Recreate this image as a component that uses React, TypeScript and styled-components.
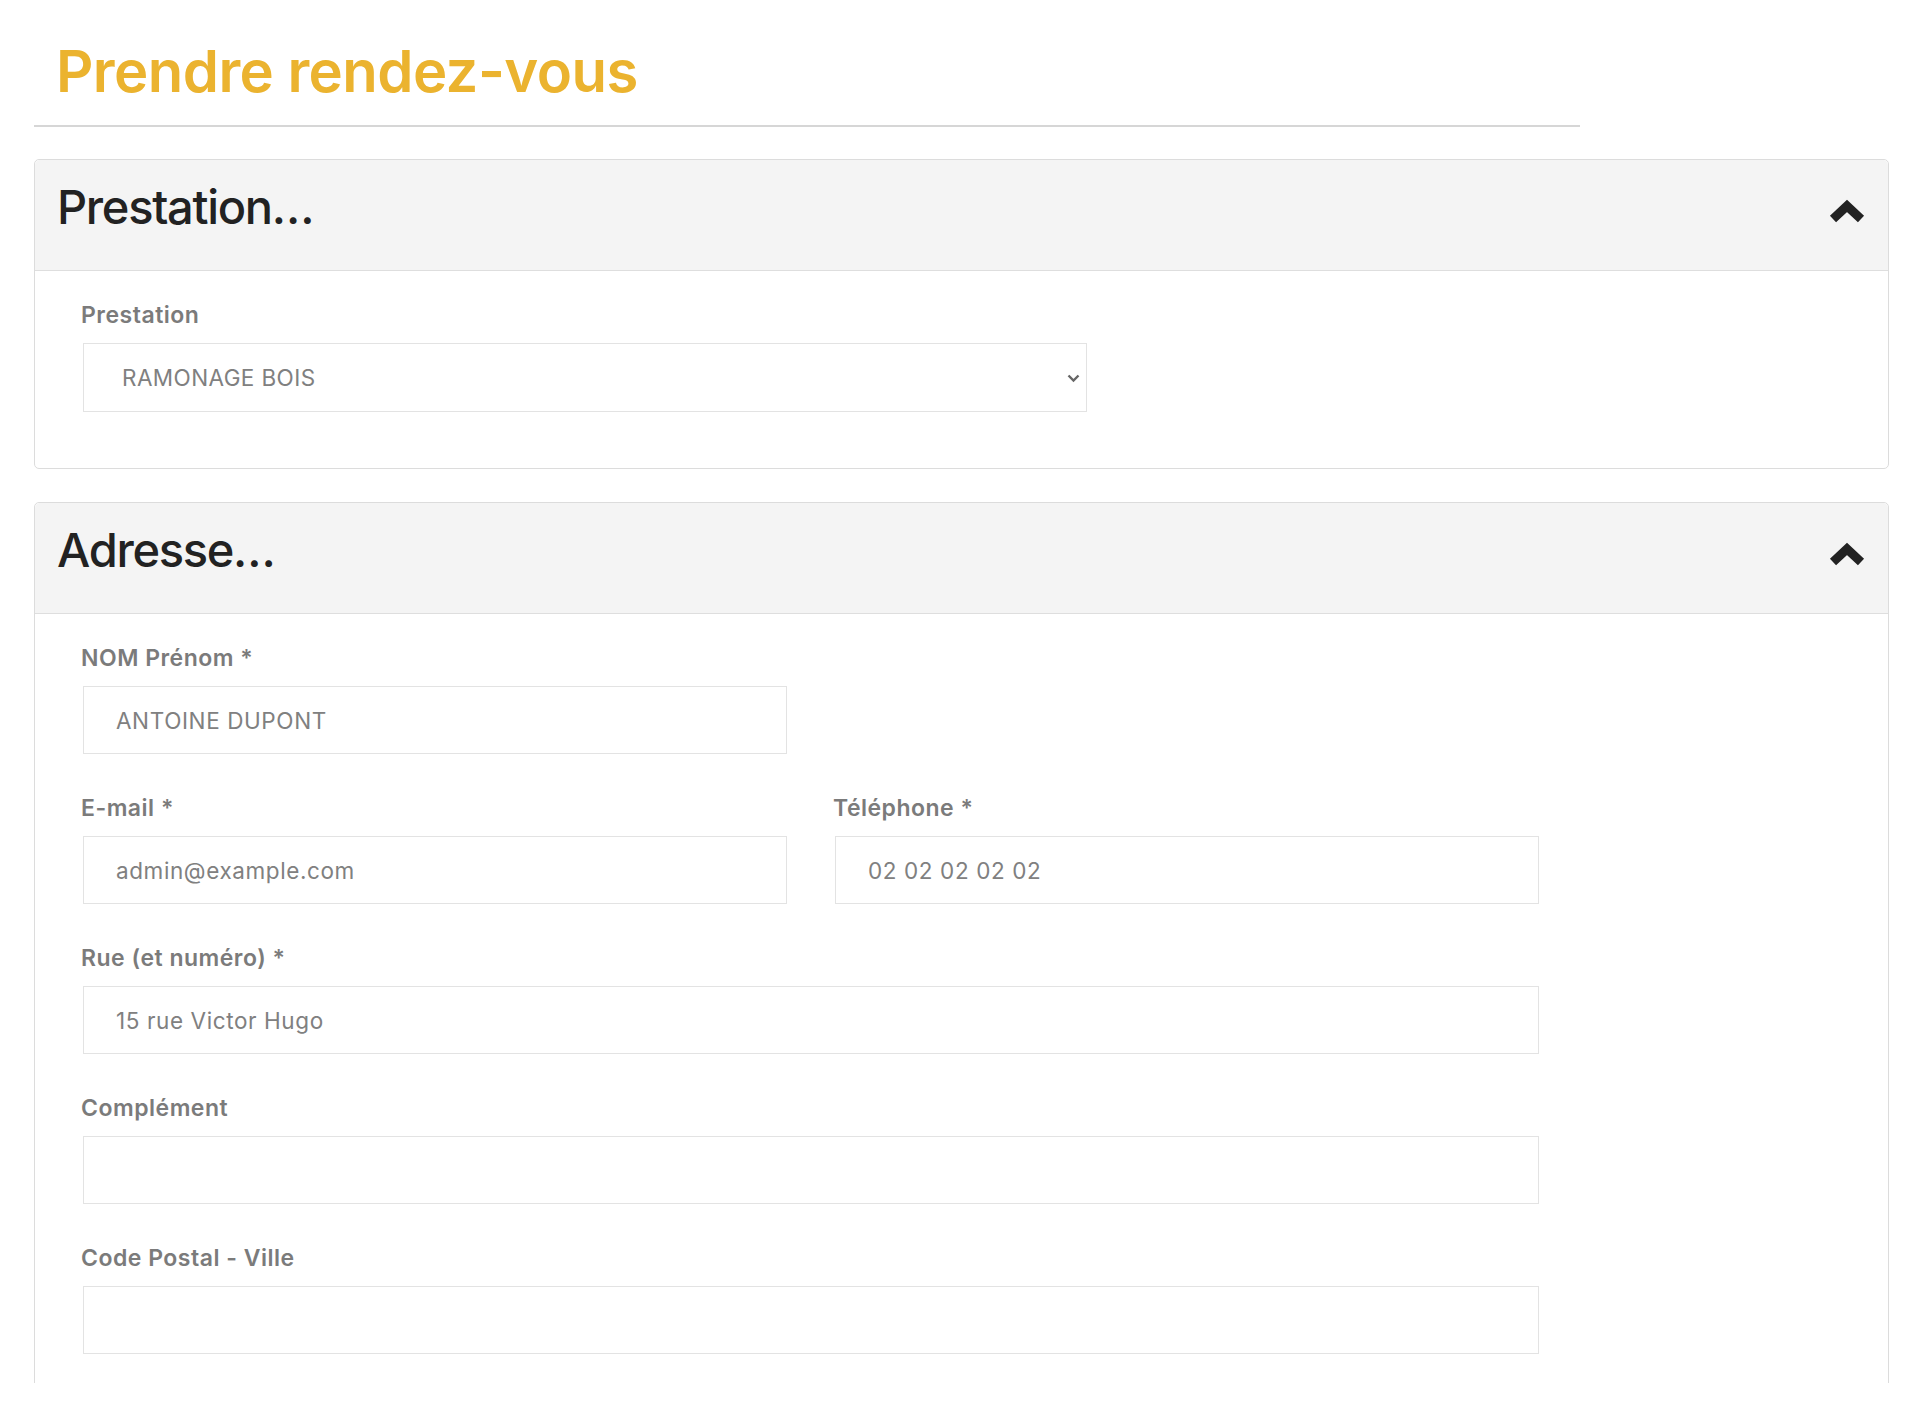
import styled, { createGlobalStyle } from "styled-components";

const GlobalStyle = createGlobalStyle`
    html, body {
        margin: 0;
        padding: 0;
        background: #ffffff;
    }
    body {
        font-family: Inter, "Noto Sans", "Liberation Sans", sans-serif;
        -webkit-font-smoothing: antialiased;
    }
    * {
        box-sizing: border-box;
    }
`;

const Page = styled.main`
    height: 1383px;
    overflow: hidden;
    padding: 0 31px 0 34px;
`;

const TitleBlock = styled.div`
    width: 1546px;
    padding: 36px 0 18px 22px;
    border-bottom: 2px solid #d6d6d6;
    margin-bottom: 32px;
`;

const PageTitle = styled.h1`
    margin: 0;
    font-size: 58px;
    line-height: 71px;
    font-weight: 600;
    letter-spacing: -0.55px;
    color: #ebb32f;
`;

const Card = styled.section`
    border: 1px solid #dcdcdc;
    border-radius: 5px;
    background: #fff;
    margin-bottom: 33px;
`;

const CardHeader = styled.header`
    height: 111px;
    display: flex;
    align-items: center;
    justify-content: space-between;
    padding: 0 23px 0 22px;
    background: #f4f4f4;
    border-bottom: 1px solid #dedede;
    border-radius: 5px 5px 0 0;
`;

const CardTitle = styled.h2`
    margin: 0 0 16px 0;
    font-size: 47px;
    line-height: 58px;
    font-weight: 500;
    letter-spacing: -1.3px;
    color: #222;
`;

const Toggle = styled.button`
    border: 0;
    background: transparent;
    padding: 0;
    margin: 0 0 8px 0;
    display: flex;
    cursor: pointer;
`;

const CardBody = styled.div<{ $bottom: number }>`
    padding: 28px 48px ${(p) => p.$bottom}px 48px;
`;

const FieldGrid = styled.div`
    display: grid;
    grid-template-columns: 704px 704px;
    column-gap: 48px;
    width: 1456px;
`;

const Field = styled.div<{ $span?: boolean; $width?: number }>`
    grid-column: ${(p) => (p.$span ? "1 / -1" : "auto")};
    width: ${(p) => (p.$width ? `${p.$width}px` : "auto")};
    margin-bottom: 38px;
    &:last-child {
        margin-bottom: 0;
    }
`;

const Label = styled.label`
    display: block;
    margin: 0 0 11px -2px;
    font-size: 23px;
    line-height: 33px;
    font-weight: 600;
    letter-spacing: 0.5px;
    color: #7b7b7b;
`;

const Input = styled.input`
    display: block;
    width: 100%;
    height: 68px;
    border: 1px solid #e3e3e3;
    border-radius: 0;
    padding: 0 20px 0 32px;
    font-family: inherit;
    font-size: 22.5px;
    letter-spacing: 0.6px;
    color: #808080;
    background: #fff;
    outline: none;
`;

const SelectWrap = styled.div`
    position: relative;
`;

const Select = styled.select`
    display: block;
    width: 100%;
    height: 69px;
    border: 1px solid #e3e3e3;
    border-radius: 0;
    padding: 0 40px 0 38px;
    font-family: inherit;
    font-size: 22.5px;
    letter-spacing: 0.4px;
    color: #808080;
    background: #fff;
    appearance: none;
    outline: none;
`;

const SelectArrow = styled.svg`
    position: absolute;
    right: 7px;
    top: 50%;
    margin-top: -4px;
    pointer-events: none;
`;

function ChevronUp() {
    return (
        <svg width="36" height="24" viewBox="0 0 36 24">
            <polyline
                points="4,20 18,7 32,20"
                fill="none"
                stroke="#222"
                strokeWidth="9"
                strokeLinejoin="miter"
            />
        </svg>
    );
}

export default function App() {
    return (
        <Page>
            <GlobalStyle />
            <TitleBlock>
                <PageTitle>Prendre rendez-vous</PageTitle>
            </TitleBlock>

            <Card>
                <CardHeader>
                    <CardTitle>Prestation…</CardTitle>
                    <Toggle aria-label="Replier">
                        <ChevronUp />
                    </Toggle>
                </CardHeader>
                <CardBody $bottom={56}>
                    <Field $width={1004}>
                        <Label>Prestation</Label>
                        <SelectWrap>
                            <Select defaultValue="bois">
                                <option value="bois">RAMONAGE BOIS</option>
                                <option value="fioul">RAMONAGE FIOUL</option>
                                <option value="gaz">RAMONAGE GAZ</option>
                            </Select>
                            <SelectArrow width="13" height="9" viewBox="0 0 13 9">
                                <polyline
                                    points="1.5,1.5 6.5,6.5 11.5,1.5"
                                    fill="none"
                                    stroke="#666"
                                    strokeWidth="2.4"
                                />
                            </SelectArrow>
                        </SelectWrap>
                    </Field>
                </CardBody>
            </Card>

            <Card>
                <CardHeader>
                    <CardTitle>Adresse…</CardTitle>
                    <Toggle aria-label="Replier">
                        <ChevronUp />
                    </Toggle>
                </CardHeader>
                <CardBody $bottom={60}>
                    <FieldGrid>
                        <Field>
                            <Label>NOM Prénom *</Label>
                            <Input defaultValue="ANTOINE DUPONT" />
                        </Field>
                        <div />
                        <Field>
                            <Label>E-mail *</Label>
                            <Input type="email" defaultValue="admin@example.com" />
                        </Field>
                        <Field>
                            <Label>Téléphone *</Label>
                            <Input type="tel" defaultValue="02 02 02 02 02" />
                        </Field>
                        <Field $span>
                            <Label>Rue (et numéro) *</Label>
                            <Input defaultValue="15 rue Victor Hugo" />
                        </Field>
                        <Field $span>
                            <Label>Complément</Label>
                            <Input />
                        </Field>
                        <Field $span>
                            <Label>Code Postal - Ville</Label>
                            <Input />
                        </Field>
                    </FieldGrid>
                </CardBody>
            </Card>
        </Page>
    );
}
